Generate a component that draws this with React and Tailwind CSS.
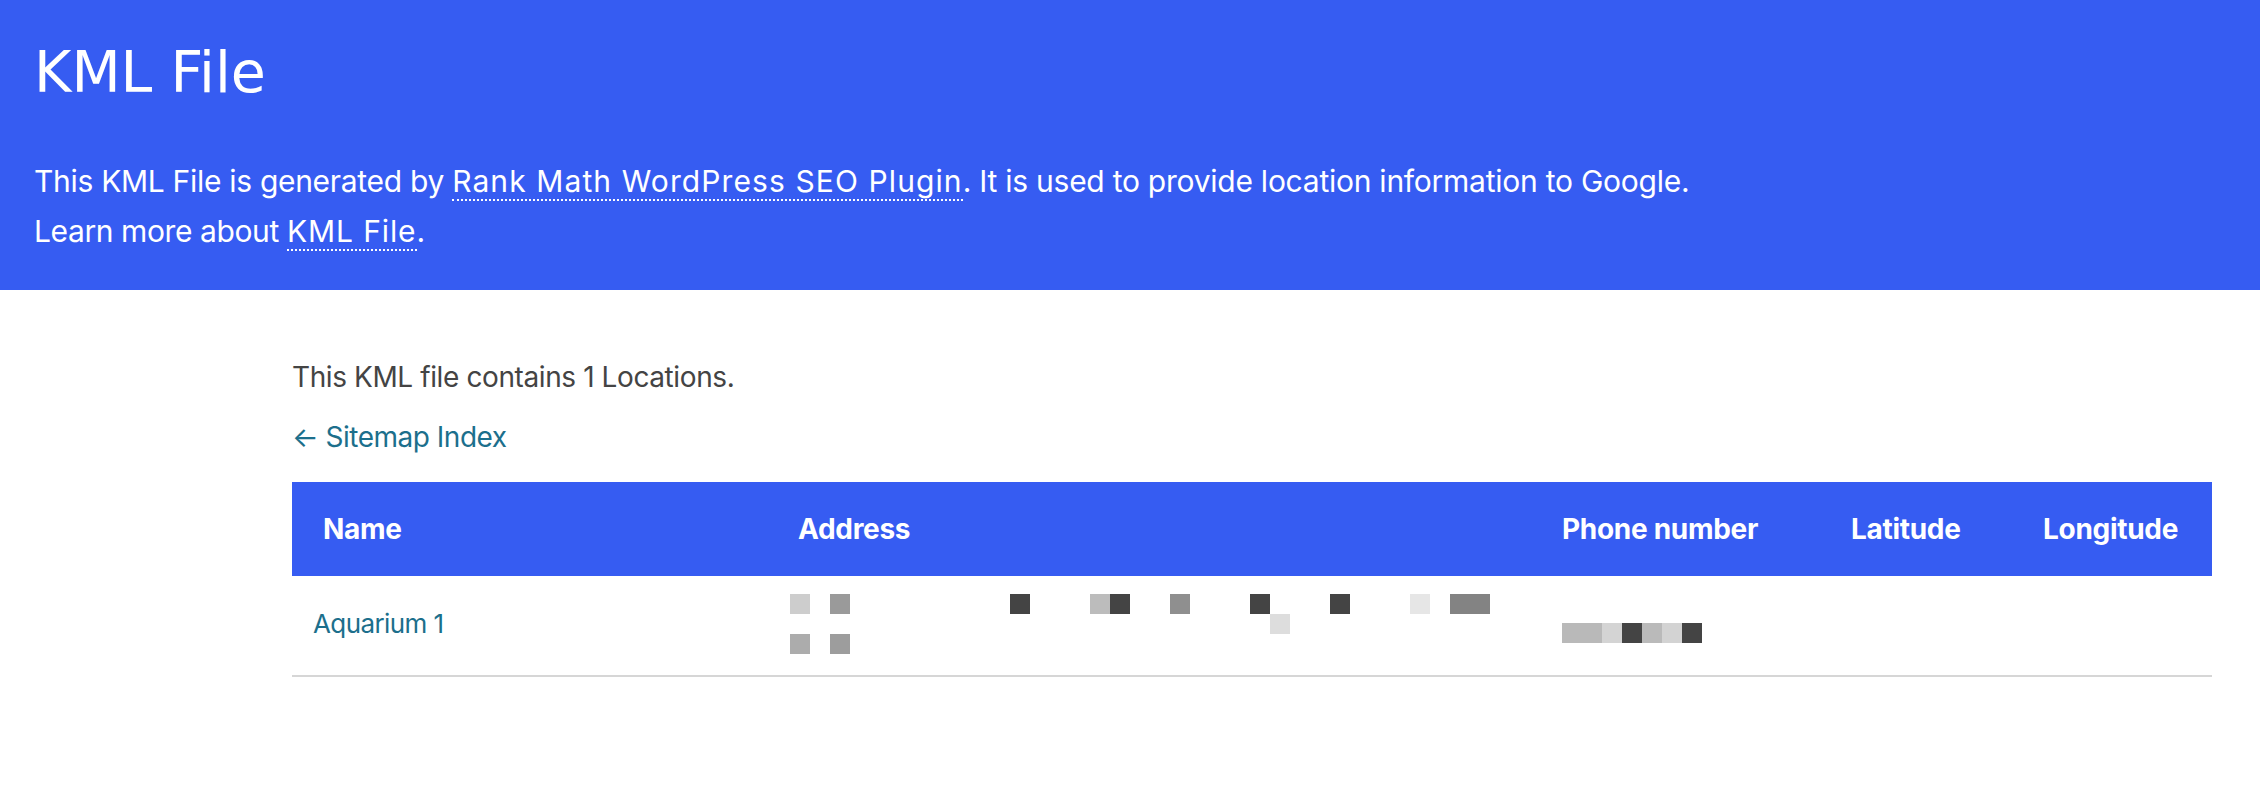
const addressRows = [
  [
    [0, "#cdcdcd"],
    [2, "#9a9a9a"],
    [11, "#444444"],
    [15, "#bcbcbc"],
    [16, "#444444"],
    [19, "#8f8f8f"],
    [23, "#444444"],
    [27, "#444444"],
    [31, "#e6e6e6"],
    [33, "#838383"],
    [34, "#838383"],
  ],
  [[24, "#dddddd"]],
  [
    [0, "#acacac"],
    [2, "#9d9d9d"],
  ],
]

const phoneRow = [
  [0, "#b9b9b9"],
  [1, "#b9b9b9"],
  [2, "#d4d4d4"],
  [3, "#444444"],
  [4, "#bababa"],
  [5, "#d3d3d3"],
  [6, "#444444"],
]

// pixelated (redacted) text drawn as a row of 20px cells
const Mosaic = ({ cells }) => {
  const last = Math.max(...cells.map((c) => c[0]))
  return (
    <div className="flex h-[20px]">
      {Array.from({ length: last + 1 }).map((_, i) => {
        const hit = cells.find((c) => c[0] === i)
        return (
          <div
            key={i}
            className="w-[20px] h-[20px]"
            style={{ background: hit ? hit[1] : "transparent" }}
          />
        )
      })}
    </div>
  )
}

const App = () => {
  return (
    <div className="min-h-[802px] bg-white font-['Inter','Liberation_Sans',sans-serif]">
      <div className="bg-[#365cf2] text-white pl-[34px] pt-[40px] pb-[34px]">
        <h1 className="font-['DejaVu_Sans',sans-serif] text-[57px] leading-[65px] font-normal">KML File</h1>
        <p className="mt-[51px] text-[30px] leading-[50px] tracking-[-0.25px]">
          <span className="tracking-[-0.3px]">This KML File is generated by </span>
          <a className="border-b-2 border-dotted border-white tracking-[1.1px]">Rank Math WordPress SEO Plugin</a>. It is used to
          provide location information to Google.
          <br />
          <span className="tracking-[-0.4px]">Learn more about </span>
          <a className="border-b-2 border-dotted border-white tracking-[0.9px]">KML File</a>.
        </p>
      </div>

      <div className="pl-[292px] pr-[48px]">
        <p className="mt-[67px] text-[28px] leading-[40px] text-[#444] tracking-[-0.4px]">
          This KML file contains 1 Locations.
        </p>
        <a className="block mt-[20px] text-[28px] leading-[40px] text-[#1c6f8c] tracking-[-0.5px]">
          ← Sitemap Index
        </a>

        <table className="mt-[25px] w-[1920px] border-collapse text-left">
          <thead>
            <tr className="bg-[#365cf2] text-white h-[94px]">
              <th className="w-[475px] pl-[31px] text-[28px] font-bold tracking-[-0.3px]">Name</th>
              <th className="w-[764px] pl-[31px] text-[28px] font-bold tracking-[-0.3px]">Address</th>
              <th className="w-[289px] pl-[31px] text-[28px] font-bold tracking-[-0.3px]">Phone number</th>
              <th className="w-[192px] pl-[31px] text-[28px] font-bold tracking-[-0.3px]">Latitude</th>
              <th className="w-[200px] pl-[31px] text-[28px] font-bold tracking-[-0.3px]">Longitude</th>
            </tr>
          </thead>
          <tbody>
            <tr className="h-[100px] border-b-2 border-[#d6d6d6]">
              <td className="pl-[21px] pb-[4px] text-[26px] text-[#1c6f8c] tracking-[-0.6px]">Aquarium 1</td>
              <td className="pl-[23px] align-top pt-[18px]">
                {addressRows.map((row, i) => (
                  <Mosaic key={i} cells={row} />
                ))}
              </td>
              <td className="pl-[31px] align-top pt-[47px]">
                <Mosaic cells={phoneRow} />
              </td>
              <td />
              <td />
            </tr>
          </tbody>
        </table>
      </div>
    </div>
  )
}

export default App
